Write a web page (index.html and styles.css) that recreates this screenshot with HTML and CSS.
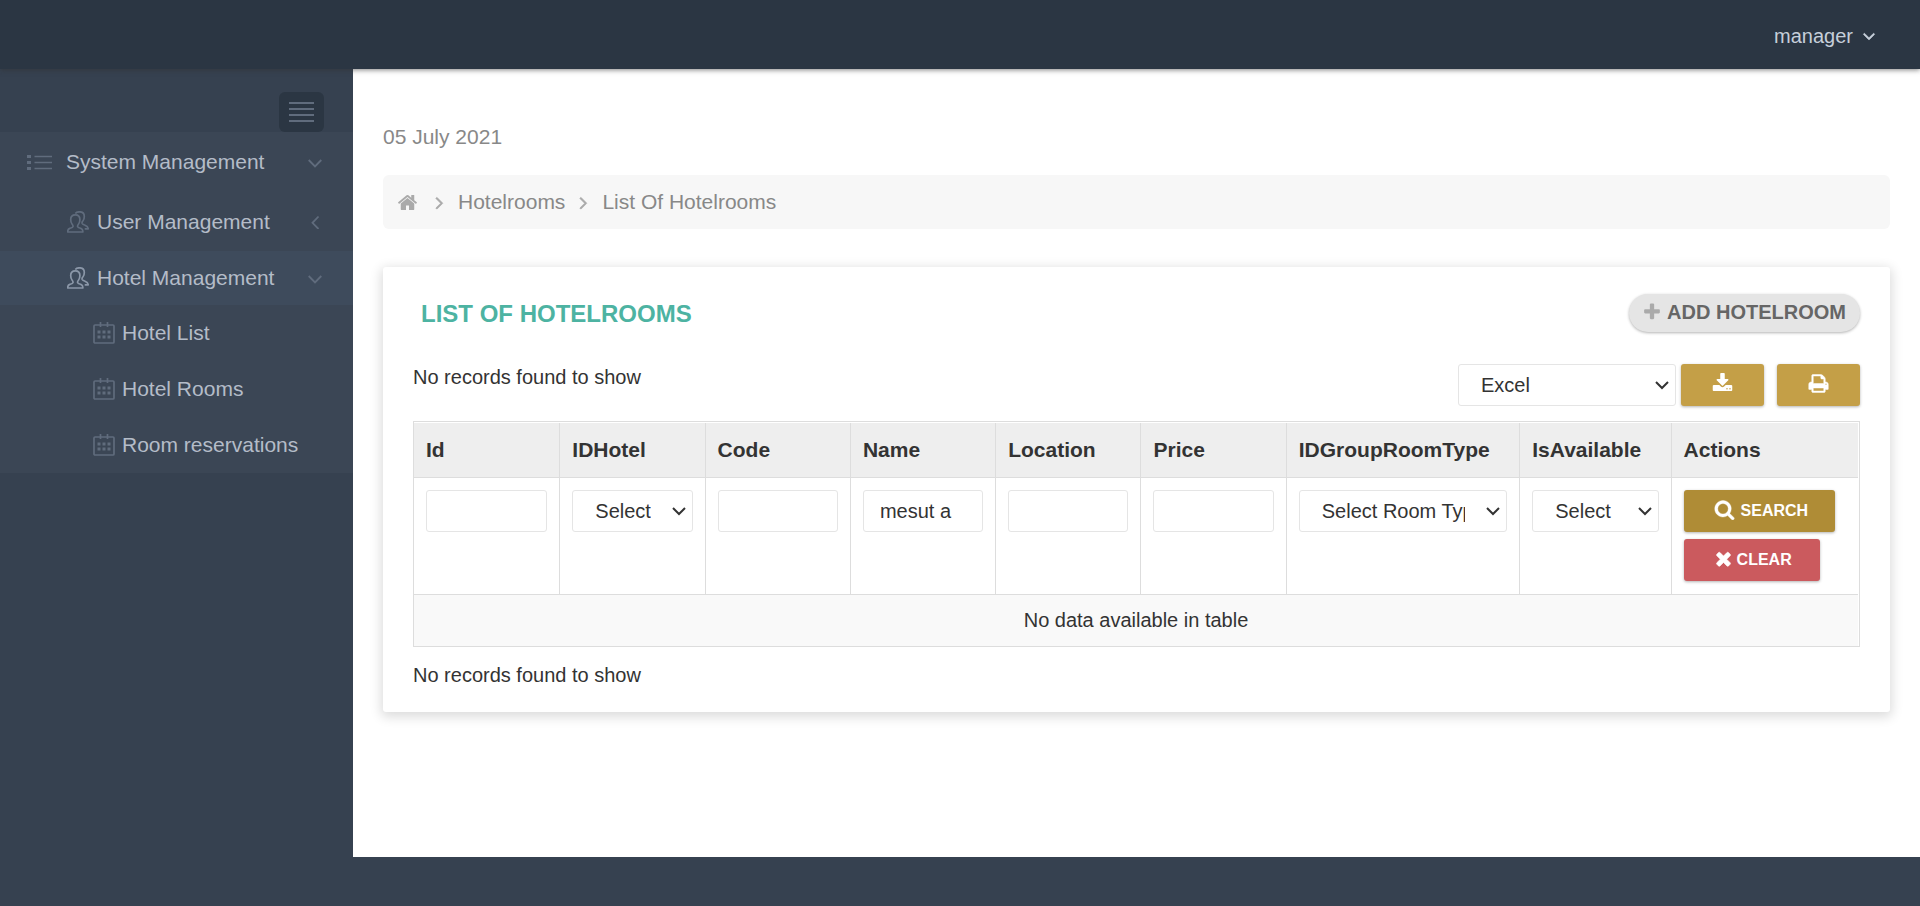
FILE: index.html
```html
<!DOCTYPE html>
<html lang="en">
<head>
<meta charset="utf-8">
<title>List Of Hotelrooms</title>
<link rel="stylesheet" href="styles.css">
</head>
<body>
<svg class="sprite" aria-hidden="true">
  <symbol id="home" viewBox="0 0 1792 1792"><path d="M1472 992v480q0 26-19 45t-45 19h-384v-384h-256v384h-384q-26 0-45-19t-19-45v-480q0-1 .5-3t.5-3l575-474 575 474q1 2 1 6zm223-69l-62 74q-8 9-21 11h-3q-13 0-21-7l-692-577-692 577q-12 8-24 7-13-2-21-11l-62-74q-8-10-7-23.5t11-21.5l719-599q32-26 76-26t76 26l244 204v-195q0-14 9-23t23-9h192q14 0 23 9t9 23v408l219 182q10 8 11 21.5t-7 23.5z"/></symbol>
  <symbol id="angle-right" viewBox="0 0 1792 1792"><path d="M1171 960q0 13-10 23l-466 466q-10 10-23 10t-23-10l-50-50q-10-10-10-23t10-23l393-393-393-393q-10-10-10-23t10-23l50-50q10-10 23-10t23 10l466 466q10 10 10 23z" stroke="currentColor" stroke-width="50"/></symbol>
  <symbol id="angle-down" viewBox="0 0 1792 1792"><path d="M1395 736q0 13-10 23l-466 466q-10 10-23 10t-23-10l-466-466q-10-10-10-23t10-23l50-50q10-10 23-10t23 10l393 393 393-393q10-10 23-10t23 10l50 50q10 10 10 23z" stroke="currentColor" stroke-width="60"/></symbol>
  <symbol id="plus" viewBox="0 0 1792 1792"><path d="M1600 736v192q0 40-28 68t-68 28h-416v416q0 40-28 68t-68 28h-192q-40 0-68-28t-28-68v-416h-416q-40 0-68-28t-28-68v-192q0-40 28-68t68-28h416v-416q0-40 28-68t68-28h192q40 0 68 28t28 68v416h416q40 0 68 28t28 68z"/></symbol>
  <symbol id="download" viewBox="0 0 1792 1792"><path d="M1344 1344q0-26-19-45t-45-19-45 19-19 45 19 45 45 19 45-19 19-45zm256 0q0-26-19-45t-45-19-45 19-19 45 19 45 45 19 45-19 19-45zm128-224v320q0 40-28 68t-68 28h-1472q-40 0-68-28t-28-68v-320q0-40 28-68t68-28h465l135 136q58 56 136 56t136-56l136-136h464q40 0 68 28t28 68zm-325-569q17 41-14 70l-448 448q-18 19-45 19t-45-19l-448-448q-31-29-14-70 17-39 59-39h256v-448q0-26 19-45t45-19h256q26 0 45 19t19 45v448h256q42 0 59 39z"/></symbol>
  <symbol id="print" viewBox="0 0 1792 1792"><path d="M448 1536h896v-256h-896v256zm0-640h896v-384h-160q-40 0-68-28t-28-68v-160h-640v640zm1152 64q0-26-19-45t-45-19-45 19-19 45 19 45 45 19 45-19 19-45zm128 0v416q0 13-9.500 22.500t-22.500 9.500h-224v160q0 40-28 68t-68 28h-960q-40 0-68-28t-28-68v-160h-224q-13 0-22.500-9.500t-9.500-22.500v-416q0-79 56.500-135.500t135.500-56.500h64v-544q0-40 28-68t68-28h672q40 0 88 20t76 48l152 152q28 28 48 76t20 88v256h64q79 0 135.500 56.500t56.500 135.500z" stroke="currentColor" stroke-width="40"/></symbol>
  <symbol id="search" viewBox="0 0 1792 1792"><path d="M1216 832q0-185-131.500-316.500t-316.500-131.500-316.500 131.500-131.500 316.500 131.500 316.500 316.500 131.500 316.500-131.500 131.500-316.500zm512 832q0 52-38 90t-90 38q-54 0-90-38l-343-342q-179 124-399 124-143 0-273.500-55.500t-225-150-150-225-55.500-273.500 55.500-273.500 150-225 225-150 273.500-55.500 273.500 55.500 225 150 150 225 55.500 273.500q0 220-124 399l343 343q37 37 37 90z" stroke="currentColor" stroke-width="30"/></symbol>
  <symbol id="times" viewBox="0 0 1792 1792"><path d="M1490 1322q0 40-28 68l-136 136q-28 28-68 28t-68-28l-294-294-294 294q-28 28-68 28t-68-28l-136-136q-28-28-28-68t28-68l294-294-294-294q-28-28-28-68t28-68l136-136q28-28 68-28t68 28l294 294 294-294q28-28 68-28t68 28l136 136q28 28 28 68t-28 68l-294 294 294 294q28 28 28 68z" stroke="currentColor" stroke-width="50"/></symbol>
  <symbol id="menu" viewBox="0 0 25 21"><path d="M0 1h25M0 7h25M0 13h25M0 19h25" fill="none" stroke="currentColor" stroke-width="2"/></symbol>
  <symbol id="list" viewBox="0 0 25 16"><path d="M7.500 2.500H25M7.500 8.500H25M7.500 14.500H25" fill="none" stroke="currentColor" stroke-width="1.300"/><path d="M0 1h4v3H0zM0 7h4v3H0zM0 13h4v3H0z"/></symbol>
  <symbol id="users" viewBox="0 0 22 22"><g fill="none" stroke="currentColor" stroke-width="1.700" stroke-linejoin="round"><path d="M.8 21c-.3-2 .5-3 2-3.600 1.700-.6 3-1 3.200-1.800.2-1-.2-1.700-1-2.600-.9-1-1.300-2.600-1.300-4.400 0-3 1.800-4.700 4.600-4.700s4.600 1.700 4.600 4.700c0 1.800-.4 3.400-1.300 4.400-.8.900-1.200 1.600-1 2.600.2.800 1.500 1.200 3.200 1.800 1.500.6 2.300 1.600 2 3.600z"/><path d="M8.300 2.500C9.300 1.300 10.800.800 12.600.8c2.900 0 4.700 1.600 4.700 4.600 0 1.800-.5 3.300-1.300 4.400-.8.900-1.100 1.500-1 2.400.2 1 1.400 1.500 3 2.100 2.300.9 3.100 1.700 3.200 3.500h-3.500"/></g></symbol>
  <symbol id="calendar" viewBox="0 0 22 22"><g fill="none" stroke="currentColor" stroke-width="1.700"><rect x="1" y="3" width="20" height="18" rx="1"/><path d="M7.500 0v5M14.500 0v5"/></g><path d="M4.500 8.500h3v3h-3zM9.500 8.500h3v3h-3zM14.500 8.500h3v3h-3zM4.500 13.500h3v3h-3zM9.500 13.500h3v3h-3zM14.500 13.500h3v3h-3z"/></symbol>
  <symbol id="thin-down" viewBox="0 0 14 14"><path d="M.7 5L7 11.500 13.300 5" fill="none" stroke="currentColor" stroke-width="1.800"/></symbol>
  <symbol id="thin-left" viewBox="0 0 14 14"><path d="M10.500 1.500L4.500 7.800l6 6.200" fill="none" stroke="currentColor" stroke-width="1.800"/></symbol>
  <symbol id="caret" viewBox="0 0 14 14"><path d="M1 4l6 6 6-6" fill="none" stroke="currentColor" stroke-width="2"/></symbol>
</svg>

<header class="topbar">
  <button class="user" type="button">manager <svg class="user-caret"><use href="#angle-down"/></svg></button>
</header>

<div class="layout">
  <nav class="sidebar" aria-label="Main">
    <div class="toggler-row">
      <button class="toggler" type="button" aria-label="Toggle menu"><svg class="icon-menu"><use href="#menu"/></svg></button>
    </div>
    <ul class="menu">
      <li><a class="item top" href="#"><svg class="icon-list"><use href="#list"/></svg><span class="label">System Management</span><svg class="arrow"><use href="#thin-down"/></svg></a></li>
      <li><a class="item second" href="#"><svg class="icon"><use href="#users"/></svg><span class="label">User Management</span><svg class="arrow"><use href="#thin-left"/></svg></a></li>
      <li><a class="item second open" href="#"><svg class="icon"><use href="#users"/></svg><span class="label">Hotel Management</span><svg class="arrow"><use href="#thin-down"/></svg></a></li>
      <li><a class="item third" href="#"><svg class="icon"><use href="#calendar"/></svg><span class="label">Hotel List</span></a></li>
      <li><a class="item third" href="#"><svg class="icon"><use href="#calendar"/></svg><span class="label">Hotel Rooms</span></a></li>
      <li><a class="item third" href="#"><svg class="icon"><use href="#calendar"/></svg><span class="label">Room reservations</span></a></li>
    </ul>
  </nav>

  <main class="content">
    <div class="date">05 July 2021</div>
    <nav class="crumbs" aria-label="Breadcrumb">
      <a class="crumb home" href="#" aria-label="Home"><svg class="fa"><use href="#home"/></svg></a>
      <svg class="sep"><use href="#angle-right"/></svg>
      <a class="crumb" href="#">Hotelrooms</a>
      <svg class="sep"><use href="#angle-right"/></svg>
      <span class="crumb">List Of Hotelrooms</span>
    </nav>

    <section class="card">
      <div class="card-head">
        <h1 class="title">LIST OF HOTELROOMS</h1>
        <a class="add" href="#"><svg class="add-icon"><use href="#plus"/></svg>ADD HOTELROOM</a>
      </div>
      <div class="tools">
        <p class="info">No records found to show</p>
        <div class="export">
          <div class="select export-format">
            <select class="control" aria-label="Export format"><option>Excel</option></select>
            <svg class="caret"><use href="#caret"/></svg>
          </div>
          <button class="btn gold" type="button" aria-label="Download"><svg class="fa"><use href="#download"/></svg></button>
          <button class="btn gold print" type="button" aria-label="Print"><svg class="fa"><use href="#print"/></svg></button>
        </div>
      </div>
      <table class="grid">
        <colgroup><col class="c-text"><col class="c-text"><col class="c-text"><col class="c-text"><col class="c-text"><col class="c-text"><col class="c-type"><col class="c-avail"><col class="c-actions"></colgroup>
        <thead>
          <tr><th>Id</th><th>IDHotel</th><th>Code</th><th>Name</th><th>Location</th><th>Price</th><th>IDGroupRoomType</th><th>IsAvailable</th><th>Actions</th></tr>
        </thead>
        <tbody>
          <tr class="filters">
            <td><input class="control" type="text" aria-label="Id"></td>
            <td><div class="select"><select class="control" aria-label="IDHotel"><option>Select</option></select><svg class="caret"><use href="#caret"/></svg></div></td>
            <td><input class="control" type="text" aria-label="Code"></td>
            <td><input class="control" type="text" aria-label="Name" value="mesut a"></td>
            <td><input class="control" type="text" aria-label="Location"></td>
            <td><input class="control" type="text" aria-label="Price"></td>
            <td><div class="select"><select class="control" aria-label="IDGroupRoomType"><option>Select Room Type</option></select><svg class="caret"><use href="#caret"/></svg></div></td>
            <td><div class="select"><select class="control" aria-label="IsAvailable"><option>Select</option></select><svg class="caret"><use href="#caret"/></svg></div></td>
            <td>
              <div class="actions">
                <button class="btn search" type="button"><svg class="fa"><use href="#search"/></svg>SEARCH</button>
                <button class="btn clear" type="button"><svg class="fa"><use href="#times"/></svg>CLEAR</button>
              </div>
            </td>
          </tr>
          <tr class="empty"><td colspan="9">No data available in table</td></tr>
        </tbody>
      </table>
      <p class="info">No records found to show</p>
    </section>
  </main>
</div>
</body>
</html>
```

FILE: styles.css
```css
*, *::before, *::after { box-sizing: border-box; }

body {
  margin: 0;
  min-height: 100vh;
  display: flex;
  flex-direction: column;
  background: #364150;
  color: #333;
  font-family: "Liberation Sans", Arial, sans-serif;
  font-size: 20px;
  line-height: 28px;
}

a { color: inherit; text-decoration: none; }
button, input, select { font: inherit; color: inherit; }
svg { display: block; flex: none; fill: currentColor; }
.sprite { position: absolute; width: 0; height: 0; }

.topbar {
  display: flex;
  justify-content: flex-end;
  align-items: center;
  height: 69px;
  padding: 3px 41px 0 0;
  background: #2b3643;
  box-shadow: 0 1px 5px rgba(50, 50, 50, 0.6);
  z-index: 1;
}
.user {
  display: flex;
  align-items: center;
  gap: 6px;
  padding: 0;
  border: 0;
  background: none;
  color: #c6cfda;
}
.user-caret { width: 20px; height: 20px; }

.layout {
  flex: 1;
  display: flex;
  padding-bottom: 49px;
}

.sidebar {
  flex: none;
  width: 353px;
  color: #b4bcc8;
  font-size: 21px;
}
.toggler-row {
  display: flex;
  justify-content: flex-end;
  padding: 23px 29px 0 0;
}
.toggler {
  display: grid;
  place-items: center;
  width: 45px;
  height: 40px;
  padding: 0;
  border: 0;
  border-radius: 6px;
  background: #2b3643;
  color: #606c7d;
}
.icon-menu { width: 25px; height: 21px; }
.menu {
  margin: 0;
  padding: 0;
  list-style: none;
  background: #3b4655;
}
.item {
  display: flex;
  align-items: center;
  height: 56px;
  padding-right: 31px;
}
.item svg { color: #606c7d; }
.item .label { flex: 1; }
.top { height: 60px; padding-left: 27px; gap: 14px; }
.second { height: 59px; padding-left: 67px; gap: 8px; }
.open { height: 54px; background: #3e4b5c; }
.open .icon { color: #8b97a8; }
.third { padding-left: 93px; gap: 7px; }
.icon-list { width: 25px; height: 16px; }
.icon { width: 22px; height: 22px; }
.arrow { width: 14px; height: 14px; }

.content {
  flex: 1;
  min-width: 0;
  padding: 54px 30px 0;
  background: #fff;
}
.date {
  color: #888;
  font-size: 21px;
}
.crumbs {
  display: flex;
  align-items: center;
  height: 54px;
  margin-top: 24px;
  padding: 0 14px;
  gap: 8px;
  border-radius: 6px;
  background: #f7f7f7;
  color: #888;
  font-size: 21px;
}
.crumbs svg { color: #aaa; }
.home { margin-right: 3px; }
.fa { width: 21px; height: 21px; }
.sep { width: 21px; height: 21px; }

.card {
  margin-top: 38px;
  padding: 27px 30px 23px;
  border-radius: 3px;
  background: #fff;
  box-shadow: 0 3px 12px 2px rgba(0, 0, 0, 0.14);
}
.card-head {
  display: flex;
  justify-content: space-between;
  align-items: center;
}
.title {
  margin: 2px 0 0;
  padding-left: 8px;
  color: #4db3a2;
  font-size: 24px;
  line-height: 36px;
}
.add {
  display: flex;
  gap: 5px;
  height: 38px;
  padding: 4px 14px 0 13px;
  border-radius: 19px;
  background: #e5e5e5;
  box-shadow: 0 1px 3px rgba(0, 0, 0, 0.3);
  color: #666;
  font-weight: bold;
}
.add-icon { width: 20px; height: 28px; color: #aaa; }

.tools {
  display: flex;
  justify-content: space-between;
  margin: 32px 0 15px;
}
.info { margin: 0; }
.tools .info { line-height: 26px; }
.export { display: flex; gap: 5px; }
.export-format { width: 218px; }
.print { margin-left: 8px; }

.control {
  display: block;
  width: 100%;
  height: 42px;
  padding: 0 16px;
  border: 1px solid #e5e5e5;
  border-radius: 3px;
  background: #fff;
}
.select { position: relative; }
.select .control {
  padding: 0 41px 0 22px;
  appearance: none;
}
.caret {
  position: absolute;
  top: 14px;
  right: 7px;
  width: 14px;
  height: 14px;
  pointer-events: none;
}

.btn {
  display: flex;
  justify-content: center;
  align-items: center;
  gap: 6px;
  height: 42px;
  padding: 0 31px;
  border: 0;
  border-radius: 3px;
  box-shadow: 0 1px 3px rgba(0, 0, 0, 0.3);
  color: #fff;
  font-size: 16px;
  font-weight: bold;
}
.btn .fa { margin-bottom: 3px; }
.gold { background: #c49f47; }
.search { padding: 0 27px 0 30px; background: #af8c36; }
.clear { padding: 0 28px 0 29px; gap: 3px; background: #cb5a5e; }

.grid {
  width: 100%;
  padding: 1px 1px 0 0;
  border: 1px solid #ddd;
  border-spacing: 0;
  table-layout: fixed;
}
.c-text { width: 145px; }
.c-type { width: 233px; }
.c-avail { width: 151px; }
.c-actions { width: 187px; }
.grid th, .grid td {
  padding: 12px;
  border-left: 1px solid #ddd;
  text-align: left;
  vertical-align: top;
}
.grid th:first-child, .grid td:first-child { border-left: 0; }
.grid th {
  padding: 13px 12px;
  border-bottom: 1px solid #ddd;
  background: #eee;
  font-size: 21px;
}
.grid .filters td {
  padding-bottom: 13px;
  border-bottom: 1px solid #ddd;
}
.actions {
  display: flex;
  flex-direction: column;
  align-items: flex-start;
  gap: 7px;
}
.grid .empty td {
  padding: 11px 12px 12px;
  background: #f9f9f9;
  text-align: center;
}
.grid + .info { margin-top: 14px; }
```
